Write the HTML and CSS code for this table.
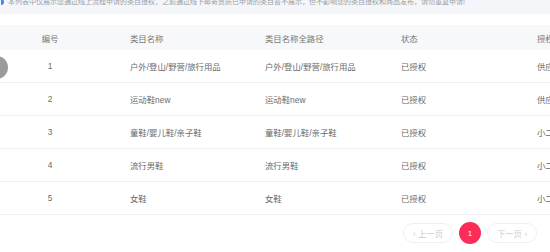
FILE: index.html
```html
<!DOCTYPE html>
<html lang="zh">
<head>
<meta charset="utf-8">
<link rel="stylesheet" href="styles.css">
</head>
<body>
<div class="page">
  <div class="notice"><span class="info"></span>本列表中仅展示您通过线上流程申请的类目授权，之前通过线下邮寄资质已申请的类目暂不展示，但不影响您的类目授权和商品发布，请勿重复申请!</div>
  <div class="table">
    <div class="row head">
      <div class="c1">编号</div><div class="c2">类目名称</div><div class="c3">类目名称全路径</div><div class="c4">状态</div><div class="c5">授权方式</div>
    </div>
    <div class="row">
      <div class="c1">1</div><div class="c2">户外/登山/野营/旅行用品</div><div class="c3">户外/登山/野营/旅行用品</div><div class="c4">已授权</div><div class="c5">供应商申请</div>
    </div>
    <div class="row">
      <div class="c1">2</div><div class="c2">运动鞋new</div><div class="c3">运动鞋new</div><div class="c4">已授权</div><div class="c5">供应商申请</div>
    </div>
    <div class="row">
      <div class="c1">3</div><div class="c2">童鞋/婴儿鞋/亲子鞋</div><div class="c3">童鞋/婴儿鞋/亲子鞋</div><div class="c4">已授权</div><div class="c5">小二授权</div>
    </div>
    <div class="row">
      <div class="c1">4</div><div class="c2">流行男鞋</div><div class="c3">流行男鞋</div><div class="c4">已授权</div><div class="c5">小二授权</div>
    </div>
    <div class="row">
      <div class="c1">5</div><div class="c2">女鞋</div><div class="c3">女鞋</div><div class="c4">已授权</div><div class="c5">小二授权</div>
    </div>
  </div>
  <div class="pager">
    <span class="btn">‹ 上一页</span>
    <span class="cur">1</span>
    <span class="btn">下一页 ›</span>
  </div>
  <div class="float"></div>
</div>
</body>
</html>
```
FILE: styles.css
```css
html, body {
  margin: 0;
  padding: 0;
  background: #fff;
  overflow: hidden;
}
body {
  width: 550px;
  height: 252px;
  font-family: "Liberation Sans", "Noto Sans CJK SC", sans-serif;
}
.page {
  position: relative;
  width: 550px;
  height: 252px;
  overflow: hidden;
}
.notice {
  height: 20px;
  margin-top: -6px;
  line-height: 16px;
  background: #f4f6f9;
  color: #9a9fa6;
  font-size: 7px;
  white-space: nowrap;
  padding-left: 1px;
  margin-bottom: 11px;
}
.info {
  display: inline-block;
  width: 3px;
  height: 6px;
  background: #3c8cf0;
  border-radius: 0 3px 3px 0;
  margin-right: 4px;
  vertical-align: -1px;
}
.table {
  width: 720px;
  font-size: 8.4px;
  color: #6a6a6a;
}
.row {
  display: grid;
  grid-template-columns: 100px 165px 136px 136px 183px;
  height: 33px;
  align-items: center;
  border-bottom: 1px solid #eeeff1;
  box-sizing: border-box;
  white-space: nowrap;
}
.row.head {
  height: 25px;
  background: #f7f8fa;
  border-bottom: none;
  color: #777;
}
.c1 { text-align: center; }
.c2 { padding-left: 30px; }
.pager {
  display: flex;
  justify-content: flex-end;
  align-items: center;
  gap: 6px;
  padding-right: 13px;
  margin-top: 7px;
}
.btn {
  width: 50px;
  height: 20px;
  box-sizing: border-box;
  border: 1px solid #f0f0f2;
  border-radius: 10px;
  color: #cacbcf;
  font-size: 8.4px;
  display: flex;
  align-items: center;
  justify-content: center;
}
.cur {
  width: 22px;
  height: 22px;
  border-radius: 50%;
  background: #fc2c58;
  color: #fff;
  font-size: 8px;
  display: flex;
  align-items: center;
  justify-content: center;
}
.float {
  position: absolute;
  left: -15px;
  top: 56px;
  width: 23px;
  height: 23px;
  border-radius: 50%;
  background: #9b9b9b;
}
```
